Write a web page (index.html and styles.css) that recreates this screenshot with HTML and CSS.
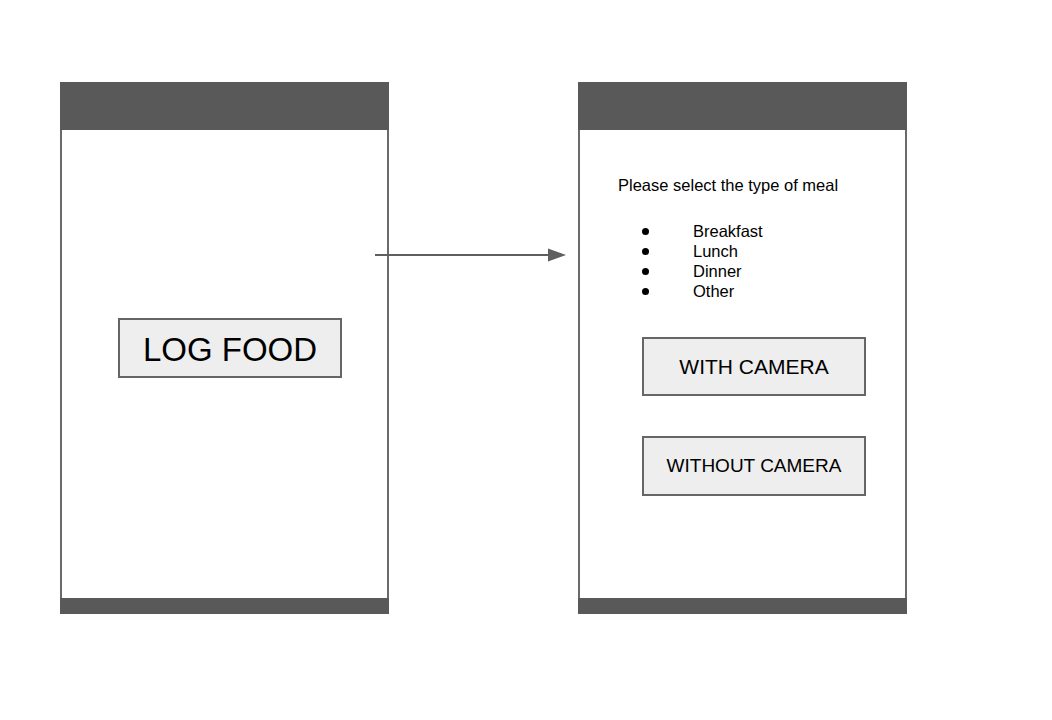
FILE: index.html
```html
<!DOCTYPE html>
<html lang="en">
<head>
    <meta charset="UTF-8">
    <meta name="viewport" content="width=device-width, initial-scale=1.0">
    <title>Log Food Flow</title>
    <link rel="stylesheet" href="styles.css">
</head>
<body>
<div class="board">
    <div class="phone">
        <div class="phone-top"></div>
        <div class="screen screen-home">
            <button class="btn btn-log">LOG FOOD</button>
        </div>
        <div class="phone-bottom"></div>
    </div>

    <svg class="arrow" width="191" height="16" viewBox="0 0 191 16">
        <line x1="0" y1="8" x2="175" y2="8" stroke="#5f5f5f" stroke-width="2"/>
        <polygon points="173,1.5 191,8 173,14.5" fill="#5f5f5f"/>
    </svg>

    <div class="phone">
        <div class="phone-top"></div>
        <div class="screen screen-meal">
            <p class="prompt">Please select the type of meal</p>
            <ul class="meal-list">
                <li>Breakfast</li>
                <li>Lunch</li>
                <li>Dinner</li>
                <li>Other</li>
            </ul>
            <button class="btn btn-camera">WITH CAMERA</button>
            <button class="btn btn-nocamera">WITHOUT CAMERA</button>
        </div>
        <div class="phone-bottom"></div>
    </div>
</div>
</body>
</html>
```

FILE: styles.css
```css
body {
    margin: 0;
    padding: 0;
    background: #fff;
    font-family: "Liberation Sans", Arial, sans-serif;
    color: #000;
}
.board {
    position: relative;
    display: flex;
    gap: 189px;
    padding: 82px 0 0 60px;
    height: 720px;
    box-sizing: border-box;
}
.phone {
    width: 329px;
    height: 532px;
    display: flex;
    flex-direction: column;
}
.phone-top {
    height: 48px;
    background: #595959;
}
.phone-bottom {
    height: 16px;
    background: #595959;
}
.screen {
    flex: 1;
    border-left: 2px solid #6a6a6a;
    border-right: 2px solid #6a6a6a;
    display: flex;
    flex-direction: column;
    align-items: flex-start;
}
.btn {
    font-family: "Liberation Sans", Arial, sans-serif;
    background: #eeeeee;
    border: 2px solid #666;
    color: #000;
    width: 224px;
    height: 60px;
    padding: 0;
    box-sizing: border-box;
}
.screen-home {
    padding: 188px 0 0 56px;
}
.btn-log {
    font-size: 33px;
    padding-top: 4px;
}
.screen-meal {
    padding: 45px 0 0 38px;
}
.prompt {
    margin: 0;
    font-size: 16.5px;
    line-height: 20px;
}
.meal-list {
    list-style: none;
    margin: 26px 0 0;
    padding: 0;
    font-size: 16.5px;
    line-height: 20px;
}
.meal-list li {
    display: flex;
    align-items: center;
}
.meal-list li::before {
    content: "";
    width: 7px;
    height: 7px;
    border-radius: 50%;
    background: #000;
    margin: 0 44px 0 24px;
}
.btn-camera {
    margin: 36px 0 0 24px;
    height: 59px;
    font-size: 21px;
}
.btn-nocamera {
    margin: 40px 0 0 24px;
    font-size: 19px;
}
.arrow {
    position: absolute;
    left: 375px;
    top: 247px;
}
```
